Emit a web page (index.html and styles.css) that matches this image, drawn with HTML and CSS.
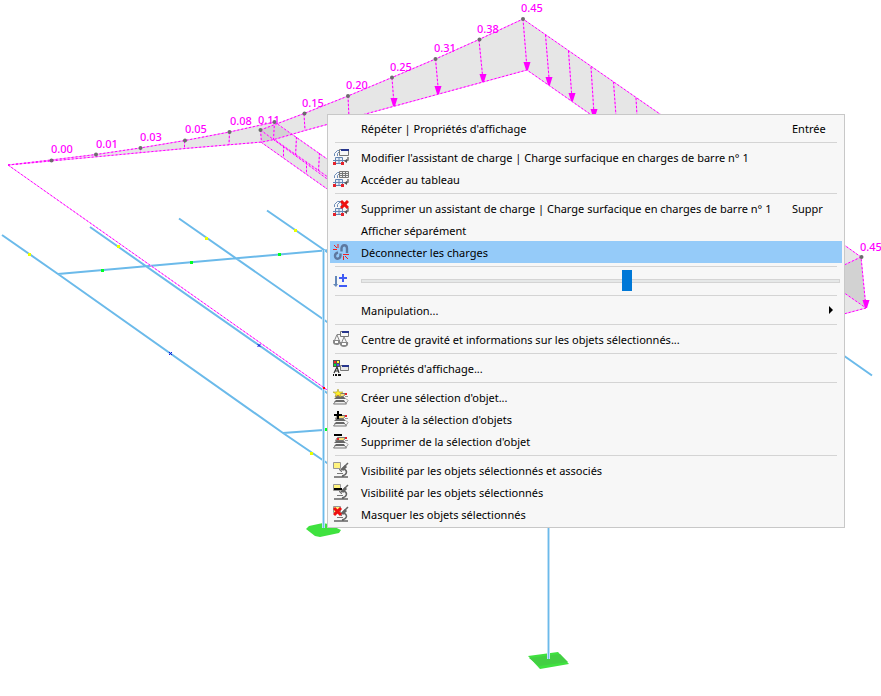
FILE: index.html
```html
<!DOCTYPE html>
<html lang="fr">
<head>
<meta charset="utf-8">
<title>Menu contextuel – charges</title>
<link rel="stylesheet" href="styles.css">
</head>
<body>
<main class="workspace">
<svg class="scene" viewBox="0 0 881 696" aria-hidden="true">
  <defs>
    <path id="load-lines" d="M8 165 51 160 96 154.500 140 148 185 140.500 229.500 132 274.500 122 M8 165 185 148.500 262 142 274 139.500 305 130.500 527 70 600 121 M260.500 130 304 113.500 348 96 392 77.500 435.500 59 479 39.500 523 19 670 121
      M8 165 330 392 M260.500 130 261.500 142.500 330 191 M260.500 130 330 181 M274.500 122 273.500 139 330 178.500 M274.500 122 330 161
      M140.500 148V152 M184.500 141V148 M229.500 132 229 145 M304 114 305 130 M348 96 349 118 M283.500 146V158 M306.500 162V174 M296.500 137 295.500 156 M319.500 153 318.500 171
      M392 78 394 104 M435.500 59 438.500 92 M479 40 483 80 M523 19 527 68 M545.500 35 549.500 84 M568.500 51 572 99 M591 67 594 114 M613.500 82 616 116 M636 98 637 116
      M840 242 861 257 866 308 840 290 M861 257 840 267 M866 308 840 315"/>
    <path id="arrow" d="M-3.500-8H3.500L1 0H-1Z"/>
  </defs>
  <path class="fill" d="M51 160 96 154.500 140 148 185 140.500 229.500 132 274.500 122 330 161V191L261.500 142.500 185 148.500Z"/>
  <path class="fill" d="M260.500 130 304 113.500 348 96 392 77.500 435.500 59 479 39.500 523 19 670 121H600L527 70 305 130.500 261.500 142.500Z"/>
  <path class="fill" d="M840 242 861 257 866 308 840 315Z"/>
  <path class="fill-dark" d="M260.500 130 275 124 292 134 273.500 139.500 261.500 142.500Z M861 257 866 308 840 290V267Z"/>
  <g class="members">
    <path d="M2 235 58 274 283 433 330 465 M90 227 330 395 M179 218.500 330 324 M267 210.500 330 254 M58 274 330 250 M283 433 330 429.500 M840 353 872 375.500"/>
  </g>
  <path class="pad" d="M306 529 309 526 323 523 328 524 341 530 339 533 320 537 315 536Z"/>
  <path class="pad" d="M528 656 558 652 569 664 540 669Z"/>
  <path class="pad-top" d="M529 658 560 654 568 662 539 666Z"/>
  <path class="column-edge" d="M323.500 250V528 M548.500 520V659"/>
  <path class="column" d="M323.500 250V528 M548.500 520V659"/>
  <use class="load-base" href="#load-lines"/>
  <use class="load-dots" href="#load-lines"/>
  <g class="arrows">
    <use href="#arrow" x="394" y="106"/><use href="#arrow" x="438" y="94"/><use href="#arrow" x="483" y="82"/><use href="#arrow" x="527" y="70"/><use href="#arrow" x="549" y="85"/><use href="#arrow" x="572" y="101"/><use href="#arrow" x="594" y="117"/><use href="#arrow" x="866" y="308"/>
  </g>
  <g class="nodes">
    <circle cx="51.500" cy="160.500" r="2"/><circle cx="96" cy="154.500" r="2"/><circle cx="140.500" cy="148" r="2"/><circle cx="185" cy="140.500" r="2"/><circle cx="229.500" cy="132" r="2"/><circle cx="260.500" cy="130" r="2"/><circle cx="274.500" cy="122" r="2"/><circle cx="304.500" cy="113.500" r="2"/><circle cx="348" cy="96" r="2"/><circle cx="392" cy="77.500" r="2"/><circle cx="435.500" cy="59" r="2"/><circle cx="479.500" cy="39.500" r="2"/><circle cx="523" cy="19" r="2"/><circle cx="861.500" cy="257" r="2"/>
  </g>
  <path class="yellow" d="M28 253h3v3h-3z M117 245h3v3h-3z M205 237h3v3h-3z M294 229h3v3h-3z M310 452h3v3h-3z"/>
  <path class="green" d="M101 269h3v3h-3z M190 261h3v3h-3z M278 253h3v3h-3z M325 428h3v3h-3z"/>
  <path class="cross" d="M169 352l3 3m0-3l-3 3 M257.500 344l3 3m0-3l-3 3"/>
  <path class="red" d="M323 387h2v2h-2z"/>
  <g class="values">
    <text x="51" y="153">0.00</text><text x="96" y="148">0.01</text><text x="140" y="141">0.03</text><text x="185" y="133">0.05</text><text x="230" y="125">0.08</text><text x="258" y="124">0.11</text><text x="302" y="107">0.15</text><text x="346" y="89">0.20</text><text x="390" y="71">0.25</text><text x="434" y="52">0.31</text><text x="477" y="33">0.38</text><text x="521" y="12">0.45</text><text x="860" y="251">0.45</text>
  </g>
</svg>

<svg class="sprites" aria-hidden="true">
  <symbol id="load" viewBox="0 0 16 16">
    <path fill="none" stroke="#6d8db8" d="M1.500 7V4.500L4.500 1.500H8 M4.500 7V4.500L7 2 M8.500 7V3"/>
    <path fill="#e4edf7" stroke="#6485b2" d="M2.500 8.500H9.500V14.500H2.500Z M0 11.500H12 M6 8V14"/>
    <path fill="#e5222b" d="M0 13h3v3H0zM8 13h3v3H8z"/>
    <path fill="none" stroke="#777" stroke-width="1.500" d="M15 8V11L13 12"/><path fill="#555" d="M11 12l3-2v4z"/>
  </symbol>
  <symbol id="edit" viewBox="0 0 16 16"><use href="#load"/><path fill="#f7f7f7" stroke="#777" d="M6.500.5h9v6h-9z"/><path fill="#26358d" d="M8 0h8v2H8z"/></symbol>
  <symbol id="table" viewBox="0 0 16 16"><use href="#load"/><path fill="#eee" stroke="#777" d="M6.500.5h9v6h-9z M6 2.500H16M6 4.500H16M9.500 0V7M12.500 0V7"/></symbol>
  <symbol id="delete" viewBox="0 0 16 16"><use href="#load"/><path stroke="#ee1010" stroke-width="3" d="M8 1l7 7m0-7L8 8"/></symbol>
  <symbol id="unlink" viewBox="0 0 16 16">
    <path fill="none" stroke="#5d789f" stroke-width="2.400" d="M8.500 7.500V4.500C8.500.2 14 .2 14 4.500V9 M7.500 9.500V11.500C7.500 16 2 15.500 2 12C2 10 3 9 5 8.500"/>
    <path stroke="#f02020" d="M1 1l3 3M5 0v4M0 5.500h4M10 10.500h6M10.500 12v4M12 12l3 3"/>
  </symbol>
  <symbol id="scale" viewBox="0 0 16 16"><path fill="#6488b8" d="M2 3h2v8h1l-2 3-3-3h2z"/><path fill="#3f5bf4" d="M9 1h2v3h3v2h-3v3H9V6H6V4h3zM6 12h8v2H6z"/></symbol>
  <symbol id="balance" viewBox="0 0 16 16">
    <path fill="none" stroke="#858585" d="M7 3.500H4L1.500 9.500M4 4l2.500 6M11 6l-2.500 6M11 6l3 6"/>
    <path fill="#888" d="M0 9h7q1 5-3.500 5T0 9M7 11h8q1 5-4 5t-4-5"/><path fill="#fff" d="M2 10h3v2H2zM9 12h4v2H9z"/>
    <path fill="#f7f7f7" stroke="#777" d="M7.500.5h8v5h-8z"/><path fill="#26358d" d="M9 0h7v2H9z"/>
  </symbol>
  <symbol id="display" viewBox="0 0 16 16">
    <path fill="#555" d="M0 0h7v7H0z"/><path fill="#f22" d="M1 1h2v2H1z"/><path fill="#ff3" d="M4 1h2v2H4z"/><path fill="#0e3" d="M1 4h2v2H1z"/><path fill="#55f" d="M4 4h2v2H4z"/>
    <path fill="none" stroke="#333" stroke-width="1.200" d="M1 13l3-6 2 6M2 11h4"/><path fill="#111" d="M0 14h1v2H0zM2 14h2v2H2zM5 14h3v2H5z"/>
    <path fill="#e8e8e8" stroke="#777" d="M7.500 5.500h8v5h-8z"/><path fill="#26358d" d="M9 5h7v2H9z"/>
  </symbol>
  <symbol id="stack" viewBox="0 0 16 16">
    <path fill="#efefef" stroke="#777" d="M2.500 12.500h9l2 2.500H.5z"/>
    <path fill="#666" d="M3 8h8l2 2H1zM3 11h8l1 2H1z"/>
    <path fill="#fbe276" stroke="#777" d="M4.500 4.500h8l-2 3h-8z"/>
    <path fill="#e5222b" d="M4 5h2v2H4zM12 4h2v2h-2z"/>
    <path fill="none" stroke="#999" d="M12 7.500h3M13 9.500l2 2-2 3"/>
  </symbol>
  <symbol id="new" viewBox="0 0 16 16"><use href="#stack"/><path fill="#ffee29" stroke="#a69b32" stroke-width=".6" d="M5 0l1 3h4L7 5l1 3-3-2-3 2 1-3-3-2h4z"/></symbol>
  <symbol id="add" viewBox="0 0 16 16"><use href="#stack"/><path d="M4 0h2v3h3v2H6v3H4V5H1V3h3z"/></symbol>
  <symbol id="remove" viewBox="0 0 16 16"><use href="#stack"/><path d="M1 1h8v2H1z"/></symbol>
  <symbol id="microscope" viewBox="0 0 16 16">
    <path fill="#fff37e" stroke="#969696" d="M.5.5h7v6h-7z"/>
    <path fill="none" stroke="#646464" stroke-width="1.500" d="M15 1L7 9M1 15h14M11 7c4 2 3 6-2 7"/>
    <path stroke="#646464" stroke-width="3" d="M13 4L9 8"/><path stroke="#777" d="M4 11.500h6M6 7l3 3"/>
  </symbol>
  <symbol id="visible" viewBox="0 0 16 16"><use href="#microscope"/><path d="M1 4h8v2H1z"/></symbol>
  <symbol id="hide" viewBox="0 0 16 16"><use href="#microscope"/><path stroke="#ee1010" stroke-width="3" d="M1 2l7 7m0-7L1 9"/></symbol>
</svg>

<nav class="menu" aria-label="Menu contextuel">
  <div class="group">
    <button class="item"><span class="label">Répéter | Propriétés d'affichage</span><span class="key">Entrée</span></button>
  </div>
  <div class="group">
    <button class="item"><svg class="icon"><use href="#edit"/></svg><span class="label">Modifier l'assistant de charge | Charge surfacique en charges de barre n° 1</span></button>
    <button class="item"><svg class="icon"><use href="#table"/></svg><span class="label">Accéder au tableau</span></button>
  </div>
  <div class="group">
    <button class="item"><svg class="icon"><use href="#delete"/></svg><span class="label">Supprimer un assistant de charge | Charge surfacique en charges de barre n° 1</span><span class="key">Suppr</span></button>
    <button class="item"><span class="label">Afficher séparément</span></button>
    <button class="item selected"><svg class="icon"><use href="#unlink"/></svg><span class="label">Déconnecter les charges</span></button>
  </div>
  <div class="group">
    <label class="item"><svg class="icon"><use href="#scale"/></svg><input class="slider" type="range" min="0" max="1000" value="557" aria-label="Échelle des charges"></label>
  </div>
  <div class="group">
    <button class="item"><span class="label">Manipulation...</span><svg class="submenu" viewBox="0 0 4 8"><path d="M0 0l4 4-4 4z"/></svg></button>
  </div>
  <div class="group">
    <button class="item"><svg class="icon"><use href="#balance"/></svg><span class="label">Centre de gravité et informations sur les objets sélectionnés...</span></button>
  </div>
  <div class="group">
    <button class="item"><svg class="icon"><use href="#display"/></svg><span class="label">Propriétés d'affichage...</span></button>
  </div>
  <div class="group">
    <button class="item"><svg class="icon"><use href="#new"/></svg><span class="label">Créer une sélection d'objet...</span></button>
    <button class="item"><svg class="icon"><use href="#add"/></svg><span class="label">Ajouter à la sélection d'objets</span></button>
    <button class="item"><svg class="icon"><use href="#remove"/></svg><span class="label">Supprimer de la sélection d'objet</span></button>
  </div>
  <div class="group">
    <button class="item"><svg class="icon"><use href="#microscope"/></svg><span class="label">Visibilité par les objets sélectionnés et associés</span></button>
    <button class="item"><svg class="icon"><use href="#visible"/></svg><span class="label">Visibilité par les objets sélectionnés</span></button>
    <button class="item"><svg class="icon"><use href="#hide"/></svg><span class="label">Masquer les objets sélectionnés</span></button>
  </div>
</nav>
</main>
</body>
</html>
```

FILE: styles.css
```css
* { box-sizing: border-box; }
body {
  margin: 0;
  background: #fff;
  color: #000;
  font-family: "Noto Sans", "Open Sans", sans-serif;
  font-size: 11px;
}
.workspace { position: relative; }
.scene { display: block; width: 100%; height: auto; }
.sprites { position: absolute; width: 0; height: 0; }

/* Model view */
.fill { fill: #e6e6e6; }
.fill-dark { fill: #d2d2d2; }
.members { fill: none; stroke: #6bbaea; stroke-width: 2; }
.column-edge { fill: none; stroke: #bfe0f6; stroke-width: 3; }
.column { fill: none; stroke: #6bbaea; stroke-width: 1; }
.load-base { fill: none; stroke: #ff8cff; stroke-width: 1; }
.load-dots { fill: none; stroke: #f0f; stroke-width: 1; stroke-dasharray: 2 2; }
.arrows { fill: #f0f; }
.nodes { fill: #6c6c6c; }
.pad { fill: #3fe23f; }
.pad-top { fill: #43cf43; }
.yellow { fill: #e8ff00; }
.green { fill: #0f2; }
.red { fill: #f00; }
.cross { fill: none; stroke: #11d; stroke-width: 1; }
.values { fill: #f0f; font-size: 11px; font-weight: 500; }

/* Context menu */
.menu {
  position: absolute;
  top: 114px;
  left: 327px;
  right: 36px;
  padding: 2px;
  background: #f7f7f7;
  border: 1px solid #c8c8c8;
}
.group + .group::before {
  content: "";
  display: block;
  height: 1px;
  margin: 3px 5px;
  background: #d4d4d4;
}
.item {
  display: grid;
  grid-template-columns: 16px 1fr auto;
  column-gap: 12px;
  align-items: center;
  width: 100%;
  height: 22px;
  padding: 0 2px 0 3px;
  border: 0;
  background: none;
  color: inherit;
  font: inherit;
  line-height: 20px;
  text-align: left;
}
.item.selected { background: #95cbf9; }
.icon { grid-column: 1; width: 16px; height: 16px; }
.label { grid-column: 2; padding-top: 2px; white-space: nowrap; }
.key { width: 48px; padding-top: 2px; }
.submenu { width: 4px; height: 8px; margin-right: 7px; }
.slider {
  grid-column: 2 / 4;
  appearance: none;
  width: 100%;
  height: 21px;
  margin: 0;
  background: none;
}
.slider::-webkit-slider-runnable-track {
  height: 4px;
  background: #e6e8e8;
  border: 1px solid #d4d4d4;
}
.slider::-webkit-slider-thumb {
  appearance: none;
  width: 10px;
  height: 21px;
  margin-top: -10px;
  background: #0078d7;
}
```
